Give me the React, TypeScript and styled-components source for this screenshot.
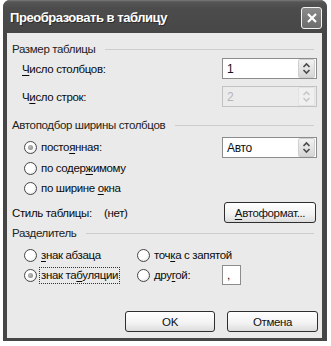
import React from "react";
import styled, { createGlobalStyle } from "styled-components";

const Global = createGlobalStyle`
  html, body { margin: 0; padding: 0; background: #ffffff; }
  body { font-family: "Liberation Sans", Arial, sans-serif; }
`;

const Page = styled.div`
  width: 331px;
  height: 346px;
  display: flex;
  padding-left: 3px;
  box-sizing: border-box;
`;

const Window = styled.div`
  width: 324px;
  height: 341px;
  display: flex;
  flex-direction: column;
  background: #464646;
  border-radius: 7px 7px 0 0;
  overflow: hidden;
`;

const TitleBar = styled.div`
  height: 33px;
  flex: none;
  display: flex;
  align-items: center;
  justify-content: space-between;
  padding: 0 5px 0 7px;
  background: linear-gradient(#7a7a7a 0, #555 2px, #4c4c4c 8px, #474747 100%);
`;

const Title = styled.div`
  color: #fff;
  font-weight: bold;
  font-size: 13px;
  letter-spacing: -0.45px;
  padding-top: 2px;
  white-space: nowrap;
  text-shadow: 1px 1px 0 #2a2a2a;
`;

const CloseBtn = styled.div`
  width: 19px;
  height: 20px;
  border: 1px solid #f4f4f4;
  border-radius: 3px;
  background: linear-gradient(#8a8a8a, #6c6c6c);
  display: flex;
  align-items: center;
  justify-content: center;
  margin-top: 3px;
`;

const Body = styled.div`
  flex: 1;
  margin: 0 5px 3px 4px;
  background: #eaeaea;
  padding: 8px 5px 0 5px;
  display: flex;
  flex-direction: column;
  font-size: 11.5px;
  letter-spacing: -0.35px;
  white-space: nowrap;
  color: #0a0a0a;
`;

const GroupHeader = styled.div<{ $mt: number }>`
  height: 16px;
  margin-top: ${(p) => p.$mt}px;
  display: flex;
  align-items: center;
  gap: 10px;
  color: #222;
  &::after {
    content: "";
    flex: 1;
    height: 1px;
    background: #cdcdcd;
    margin-right: 3px;
  }
`;

const FieldRow = styled.div<{ $mt: number }>`
  height: 21px;
  margin-top: ${(p) => p.$mt}px;
  display: grid;
  grid-template-columns: 210px 95px;
  align-items: center;
`;

const IndentLabel = styled.div`
  padding-left: 10px;
`;

const SpinBox = styled.div<{ $disabled?: boolean }>`
  height: 21px;
  box-sizing: border-box;
  border: 1px solid ${(p) => (p.$disabled ? "#c2c2c2" : "#8c8c8c")};
  background: ${(p) => (p.$disabled ? "#ebebeb" : "#ffffff")};
  display: flex;
  align-items: center;
  padding: 1px 1px 1px 4px;
  color: ${(p) => (p.$disabled ? "#b4b4b4" : "#111")};
  font-size: 12px;
`;

const SpinValue = styled.div`
  flex: 1;
`;

const SpinButtons = styled.div<{ $disabled?: boolean }>`
  width: 15px;
  height: 17px;
  border-radius: 2px;
  background: ${(p) => (p.$disabled ? "#f0f0f0" : "linear-gradient(#f2f2f2, #d6d6d6)")};
  border: 1px solid ${(p) => (p.$disabled ? "#e2e2e2" : "#cfcfcf")};
  display: flex;
  align-items: center;
  justify-content: center;
`;

const RadioRow = styled.div`
  height: 20px;
  display: flex;
  align-items: center;
  padding-left: 12px;
`;

const RadioCircle = styled.span<{ $checked?: boolean }>`
  width: 11px;
  height: 11px;
  border-radius: 50%;
  border: 1px solid #474747;
  background: radial-gradient(circle at 40% 40%, #ffffff 45%, #d8d8d8 100%);
  display: inline-flex;
  align-items: center;
  justify-content: center;
  flex: none;
  margin-right: 3px;
  &::after {
    content: "";
    display: ${(p) => (p.$checked ? "block" : "none")};
    width: 5px;
    height: 5px;
    border-radius: 50%;
    background: radial-gradient(circle at 40% 40%, #bdbdbd, #7f7f7f);
  }
`;

const RadioText = styled.span<{ $focus?: boolean }>`
  outline: ${(p) => (p.$focus ? "1px dotted #333" : "none")};
  padding: 0 1px;
  line-height: 15px;
`;

const SepGrid = styled.div`
  display: grid;
  grid-template-columns: 113px 85px 19px;
  padding-left: 12px;
`;

const SepCell = styled.div<{ $h: number; $mt?: number }>`
  height: ${(p) => p.$h}px;
  margin-top: ${(p) => p.$mt ?? 0}px;
  display: flex;
  align-items: center;
`;

const SmallInput = styled.div`
  width: 19px;
  height: 20px;
  box-sizing: border-box;
  border: 1px solid #8c8c8c;
  background: #fff;
  padding-left: 4px;
  line-height: 18px;
`;

const StyleRow = styled.div`
  height: 21px;
  margin-top: 4px;
  display: grid;
  grid-template-columns: 92px 120px 92px;
  align-items: center;
`;

const XPButton = styled.div<{ $w: number }>`
  width: ${(p) => p.$w}px;
  height: 21px;
  box-sizing: border-box;
  border: 1px solid #2e2e2e;
  border-radius: 3px;
  background: linear-gradient(#ffffff, #f2f2f2 60%, #dcdcdc);
  display: flex;
  align-items: center;
  justify-content: center;
  color: #111;
`;

const ButtonRow = styled.div`
  margin-top: 26px;
  display: flex;
  justify-content: flex-end;
  gap: 12px;
  margin-right: -1px;
`;

const U = styled.span`
  text-decoration: underline;
  text-underline-offset: 2px;
`;

const Spinner = ({ disabled }: { disabled?: boolean }) => (
  <SpinButtons $disabled={disabled}>
    <svg width="9" height="13" viewBox="0 0 9 13">
      <path
        d="M1.5 5 L4.5 2 L7.5 5 M1.5 8 L4.5 11 L7.5 8"
        fill="none"
        stroke={disabled ? "#c8c8c8" : "#4a4a4a"}
        strokeWidth="1.6"
      />
    </svg>
  </SpinButtons>
);

export default function App() {
  return (
    <>
      <Global />
      <Page>
        <Window>
          <TitleBar>
            <Title>Преобразовать в таблицу</Title>
            <CloseBtn>
              <svg width="12" height="12" viewBox="0 0 12 12">
                <path d="M2 2 L10 10 M10 2 L2 10" stroke="#fff" strokeWidth="2.2" />
              </svg>
            </CloseBtn>
          </TitleBar>
          <Body>
            <GroupHeader $mt={0}>Размер таблицы</GroupHeader>
            <FieldRow $mt={1}>
              <IndentLabel>
                <U>Ч</U>исло столбцов:
              </IndentLabel>
              <SpinBox>
                <SpinValue>1</SpinValue>
                <Spinner />
              </SpinBox>
            </FieldRow>
            <FieldRow $mt={7}>
              <IndentLabel>
                Ч<U>и</U>сло строк:
              </IndentLabel>
              <SpinBox $disabled>
                <SpinValue>2</SpinValue>
                <Spinner disabled />
              </SpinBox>
            </FieldRow>
            <GroupHeader $mt={10}>Автоподбор ширины столбцов</GroupHeader>
            <FieldRow $mt={4}>
              <RadioRow>
                <RadioCircle $checked />
                <RadioText>
                  посто<U>я</U>нная:
                </RadioText>
              </RadioRow>
              <SpinBox>
                <SpinValue>Авто</SpinValue>
                <Spinner />
              </SpinBox>
            </FieldRow>
            <RadioRow>
              <RadioCircle />
              <RadioText>
                по содер<U>ж</U>имому
              </RadioText>
            </RadioRow>
            <RadioRow>
              <RadioCircle />
              <RadioText>
                по ширине <U>о</U>кна
              </RadioText>
            </RadioRow>
            <StyleRow>
              <span>Стиль таблицы:</span>
              <span>(нет)</span>
              <XPButton $w={92}>
                <span>
                  <U>А</U>втоформат...
                </span>
              </XPButton>
            </StyleRow>
            <GroupHeader $mt={2}>Разделитель</GroupHeader>
            <SepGrid>
              <SepCell $h={20} $mt={4}>
                <RadioCircle />
                <RadioText>
                  <U>з</U>нак абзаца
                </RadioText>
              </SepCell>
              <SepCell $h={20} $mt={4}>
                <RadioCircle />
                <RadioText>
                  точ<U>к</U>а с запятой
                </RadioText>
              </SepCell>
              <span />
              <SepCell $h={20}>
                <RadioCircle $checked />
                <RadioText $focus>
                  знак та<U>б</U>уляции
                </RadioText>
              </SepCell>
              <SepCell $h={20}>
                <RadioCircle />
                <RadioText>
                  дру<U>г</U>ой:
                </RadioText>
              </SepCell>
              <SepCell $h={20}>
                <SmallInput>,</SmallInput>
              </SepCell>
            </SepGrid>
            <ButtonRow>
              <XPButton $w={90}>OK</XPButton>
              <XPButton $w={91}>Отмена</XPButton>
            </ButtonRow>
          </Body>
        </Window>
      </Page>
    </>
  );
}
